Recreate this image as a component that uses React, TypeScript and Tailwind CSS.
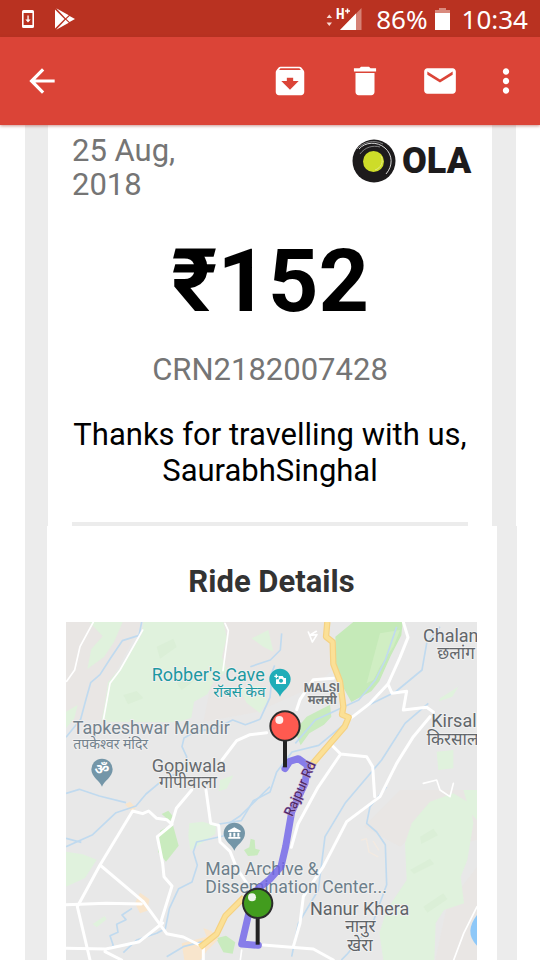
import type { ReactNode } from "react";
import { MdArchive, MdArrowBack, MdDelete, MdMail, MdMoreVert } from "react-icons/md";

function StatusBar() {
  return (
    <div className="flex h-[37px] items-center justify-between bg-[#b93221] pr-3 pl-[22px] text-white">
      <div className="flex items-center gap-5">
        <svg viewBox="0 0 12 18" className="h-[18px] w-3" aria-hidden="true">
          <path fillRule="evenodd" fill="#fff" d="M1.5 0h9A1.5 1.5 0 0 1 12 1.5v15a1.5 1.5 0 0 1-1.5 1.5h-9A1.5 1.5 0 0 1 0 16.5v-15A1.5 1.5 0 0 1 1.5 0zM1.6 3v12h8.800V3z" />
          <path fill="#fff" d="M5.4 5.5h1.300v4h2L6 12.500 3.400 9.500h2z" />
        </svg>
        <svg viewBox="0 0 22 22" className="size-[22px]" aria-hidden="true">
          <path fill="#fff" d="M1 1.500v19L10.500 11z" />
          <path fill="#fff" d="M2.200.300 14.800 7.300 11.600 10.200zM2.200 21.700l12.600-7-3.200-2.900zM15.600 7.900 21 11l-5.400 3.100L12.400 11z" />
        </svg>
      </div>
      <div className="flex items-center font-['Noto_Sans',sans-serif] text-[26px] leading-9">
        <svg viewBox="0 0 36 24" className="mr-3.5 h-6 w-9" aria-label="Mobile signal">
          <path fill="#f8d8d2" d="M3.300 7.500 6 11H.600zM3.300 19 6 15.500H.600z" />
          <path fill="#d68175" d="M35.500 1v22H14z" />
          <path fill="#fff" d="M30 6.500V23H14z" />
          <path fill="#b93221" d="M9 0h15v7l-5 6H9z" />
          <text x="10" y="12" fill="#fff" fontSize="14" fontWeight="700" fontFamily="'Roboto Condensed', 'Liberation Sans Narrow', Roboto, sans-serif">H</text>
          <path stroke="#fff" strokeWidth="1.500" d="M19 4h5M21.500 1.500v5" />
        </svg>
        <span>86%</span>
        <svg viewBox="0 0 15 22" className="mr-3 ml-[7px] h-[22px] w-[15px]" aria-label="Battery">
          <path fill="#d98a7e" d="M4 0h7v2h4v4H0V2h4z" />
          <path fill="#fff" d="M0 5h15v17H0z" />
        </svg>
        <span>10:34</span>
      </div>
    </div>
  );
}

function IconButton({ label, children }: { label: string; children: ReactNode }) {
  return (
    <button type="button" aria-label={label} className="flex size-[38px] items-center justify-center">
      {children}
    </button>
  );
}

function Toolbar() {
  return (
    <header className="relative flex h-[88px] items-center justify-between bg-[#db4437] pr-[15px] pl-[23px] text-[38px] text-white shadow-[0_1px_3px_rgba(150,50,40,0.5)]">
      <IconButton label="Back"><MdArrowBack /></IconButton>
      <div className="flex items-center">
        <div className="mr-7 flex gap-[37px]">
          <IconButton label="Archive"><MdArchive /></IconButton>
          <IconButton label="Delete"><MdDelete /></IconButton>
          <IconButton label="Mark as unread"><MdMail /></IconButton>
        </div>
        <IconButton label="More options"><MdMoreVert /></IconButton>
      </div>
    </header>
  );
}

function OlaLogo() {
  return (
    <svg viewBox="0 0 120 44" className="-mr-1 mt-[5px] h-11 w-[120px]" role="img" aria-label="Ola">
      <circle cx="22" cy="22" r="21.500" fill="#1d1b1c" />
      <path fill="none" stroke="#d9d9d9" strokeWidth="1" d="M7 10C13 3 25 2 33 9c8 7 8 18 1 26" />
      <path fill="none" stroke="#9a9a9a" strokeWidth=".8" d="M5 10C11 3 22 0 31 5M8 15C13 8 21 6 28 8" />
      <circle cx="21.500" cy="22.500" r="10.500" fill="#cddc29" />
      <path fill="none" stroke="#e3ea83" strokeWidth="1" d="M29 17c3 6 0 12-6 14" />
      <text x="50" y="34" fill="#1d1b1c" fontSize="36" fontWeight="900" fontFamily="Roboto, sans-serif">OLA</text>
    </svg>
  );
}

type Label = { text: string; x: number; y: number; size: number; fill: string; middle?: boolean; bold?: boolean };

const labels: Label[] = [
  { text: "Robber's Cave", x: 275, y: 184, size: 54, fill: "#1d99a1" },
  { text: "रॉबर्स केव", x: 538, y: 232, size: 45, fill: "#1d99a1", middle: true },
  { text: "Tapkeshwar Mandir", x: 38, y: 341, size: 54, fill: "#73828d" },
  { text: "तपकेश्वर मंदिर", x: 152, y: 388, size: 42, fill: "#73828d", middle: true },
  { text: "Gopiwala", x: 275, y: 455, size: 54, fill: "#666a6d" },
  { text: "गोपीवाला", x: 384, y: 505, size: 51, fill: "#666a6d", middle: true },
  { text: "Chalan", x: 1089, y: 66, size: 54, fill: "#62666a" },
  { text: "छलांग", x: 1188, y: 116, size: 51, fill: "#62666a", middle: true },
  { text: "MALSI", x: 785, y: 215, size: 36, fill: "#6c7074", middle: true, bold: true },
  { text: "मलसी", x: 787, y: 252, size: 36, fill: "#6c7074", middle: true, bold: true },
  { text: "Kirsal", x: 1114, y: 322, size: 54, fill: "#62666a" },
  { text: "किरसाल", x: 1100, y: 376, size: 51, fill: "#62666a" },
  { text: "Map Archive &", x: 436, y: 765, size: 53, fill: "#6d7f8b" },
  { text: "Dissemination Center...", x: 436, y: 819, size: 53, fill: "#6d7f8b" },
  { text: "Nanur Khera", x: 750, y: 886, size: 54, fill: "#5f6468" },
  { text: "नानुर", x: 901, y: 935, size: 51, fill: "#5f6468", middle: true },
  { text: "खेरा", x: 900, y: 992, size: 51, fill: "#5f6468", middle: true },
];

function PlacePin({ x, y, fill, children }: { x: number; y: number; fill: string; children: ReactNode }) {
  return (
    <g transform={`translate(${x} ${y})`}>
      <path fill={fill} d="M0 52C-5 36-32 24-32 0a32 32 0 0 1 64 0C32 24 5 36 0 52z" />
      {children}
    </g>
  );
}

function RoutePin({ x, y, fill }: { x: number; y: number; fill: string }) {
  return (
    <g transform={`translate(${x} ${y})`}>
      <path stroke="#222" strokeWidth="12" d="M0 44v80" />
      <circle r="44" fill={fill} stroke="#2b2b2b" strokeWidth="6" />
      <circle cx="-17" cy="-18" r="12" fill="#fff" fillOpacity=".9" />
    </g>
  );
}

function RideMap() {
  return (
    <svg viewBox="18 6 1233 1014" className="block w-full" role="img" aria-label="Map of the ride">
      <rect x="18" y="6" width="1233" height="1014" fill="#e8e8e8" />
      <g fill="#e9e6e4">
        <path d="M18 6h230L150 190l-20 110H18zM490 6h310l30 130-60 60-180 80-160 30z" />
        <path d="M1020 510h231v150l-80 20-90-60-60 60-110-60z" />
        <path d="M1160 860l91-120v280h-125z" />
      </g>
      <g fill="#e0f2dd">
        <path d="M250 6h240l10 45-14 60 16 42-40 30-20 40-40 22-8 48-40 14-230-2 10-50 10-68 34-40 40-62 26-40z" />
        <path d="M88 6h100l-26 60-30 45-50 36 12-60 34-38z" />
        <path d="M18 275l35-20-10 40-25 30z" />
        <path d="M575 55l50-25 15 65-30-15zM538 205l62-10 22 50-22 34-40-30z" />
        <path d="M1130 395l50-5v55l-45 5zM1140 235l55-35-18 30-40 14zM480 480l40-14-20 40-24 8z" />
        <path d="M18 695l50 8 42 16-35 55-57 26z" />
        <path d="M388 610l40-5 40 12-2 25-75 50-6-45z" />
        <path d="M98 912l36-24 6 10-30 24z" />
        <path d="M1110 545l70-25 50 30 10 60-18 110-20 50 10 80-60 20-25 40-4 110H970l-12-80 22-70 60-90-5-110 20-60z" />
        <path d="M1210 510h41v90l-20-20z" />
      </g>
      <g fill="#dbefd7">
        <path d="M290 80l50-24 10 25-50 35zM190 225l40-12 20 22-46 18zM350 190l45-30 10 20-40 30z" />
        <path d="M1080 650l40-24 14 20-50 26zM1050 750l60-34 12 16-60 30zM1090 860l60-40 12 18-60 40z" />
      </g>
      <path fill="#c5eab8" d="M826 50L880 6h148l-4 40-32 62-34 76-24 30-60 32-22-40-22-30-3-80z" />
      <path fill="#d0eec3" d="M960 40l60-10-20 50-40 60-20 40-20 10 16-60z" />
      <g fill="#c9ebbe">
        <path d="M740 290l70-36 4 36-22 24-44 26-26 36-18-44z" />
        <path d="M300 632l38-20 18 65-38 48-24-30z" />
        <path d="M305 582l20-10 13 16-8 16zM552 690l16-8 4-26 12 4 2 26 14 4-8 16-28 2zM468 955l30-8 28 20-8 34-28-4z" />
      </g>
      <path fill="#f8e5cc" d="M195 553l15-8 18 18-12 12zM225 850l15-32 28 20-6 34-22 8zM365 970l75-20-10-26 25 10 20 24-34 34-20 28h-48z" />
      <path fill="#8ec8f8" d="M1251 885v92q-21-22-20-45 2-24 20-47z" />

      <g fill="none" stroke="#c0daef" strokeWidth="5" strokeLinejoin="round">
        <path d="M245 6l-8 40-50 16-35 52-32 50-28 24-14 50-16 60-44 54" />
        <path d="M600 298l-44 16-38-14-50 24-60 10-36 20-6 26 14 30-4 36M600 298l30-66 6-60M630 172l14-36M665 40l-4 50-30 30-60 20" />
        <path d="M18 680l80-36 70-66 60-20 30-36 60-50 50-16M18 655l46 12M18 520l40-12 60 20 80 20" />
        <path d="M1140 20l-40 50-14 80-80 66-90 44-60 50-80 66-80 20-46 60-20 60-50 26-36 60-66 10" />
        <path d="M1010 20l-34 100-30 60-50 60-130 60-60 70M1105 250l-70 60-70 110-110 130-60 100-20 160-60 100-20 100" />
        <path d="M630 500l-90 88-30 20-20 40-80 18-10 30 12 40-16 50-40 20-28 60-12 60-26 14-60 20-40 38" />
        <path d="M216 865l-30 20 12 14-28 14 4 24-24 10 10 30-20 12" />
        <path d="M980 500l-50 60-10 50 30 26 26 38 4 120-40 110-30 40-50 60-16 16" />
        <path d="M320 1010l50-30 60-16" />
      </g>

      <g fill="none" stroke="#fff" strokeWidth="9" strokeLinejoin="round" strokeLinecap="round">
        <path strokeWidth="5" d="M100 6L60 80l-16 70-24 34M248 30l-68 120-30 40-20 110M495 10l10 22-16 120" />
        <path d="M620 338l-50 6-40 18-44 58M395 510l-46 55-15 50-42 35 16 80 4 40 24 28-34 110" />
        <path d="M218 573L120 735 52 860l38 160M218 573l30 8 18-8 24 22 30 4 16 14M120 735l130 110 70 96 50 10 60 30v39" />
        <path d="M18 854l120-4 106 2M18 985l120 2 100-22 70-56M135 995l50 25" />
        <path d="M438 510l14 100 24 6 4 50 30 28 20 50 40 60" />
        <path d="M1030 6l14 46-24 60-36 80-54 58-70 54M984 192l12 28 44-6-10 56 70-8 20 14M1110 290l-50 60-50 80-50 100-100 75-70 135-60 90-10 80-20 70" />
        <path d="M810 370l32 32 78 8 18 30 6 90M842 402l-68 100-60 110-20 70M610 975l150 12 60 33" />
        <path d="M820 175l-60 4-40 60-10 30" />
        <path strokeWidth="5" d="M745 36l12 30 14-22-22 2 20-12M545 990l-4 30M1251 860l-40 80-30 80M1090 490l40-10 10 30 30 20 10-40" />
        <path strokeWidth="4" stroke="#f3eae1" d="M905 660l14-4 8 40 26 14M940 664l16 26" />
      </g>

      <g fill="none" strokeLinejoin="round">
        <path stroke="#f5d182" strokeWidth="19" d="M802 6l-4 44 20 16 2 66 20 52 10 76-4 24 20 8-12 28-104 120M552 832l-56 56-26 54-50 40" />
        <path stroke="#fbe096" strokeWidth="12" d="M802 6l-4 44 20 16 2 66 20 52 10 76-4 24 20 8-12 28-104 120M552 832l-56 56-26 54-50 40" />
      </g>

      <g fontFamily="Roboto, 'Noto Sans', 'Noto Sans Devanagari', sans-serif" stroke="#f0f0f0" strokeWidth="6" strokeLinejoin="round" paintOrder="stroke">
        {labels.map((l) => (
          <text key={l.text} x={l.x} y={l.y} fontSize={l.size} fill={l.fill} fontWeight={l.bold ? 700 : 400} textAnchor={l.middle ? "middle" : "start"}>
            {l.text}
          </text>
        ))}
      </g>

      <PlacePin x={660} y={178} fill="#20adb8">
        <path fill="#fff" fillRule="evenodd" d="M-4-10h12l4 6h6v18h-30V0h8zM3-2a6 6 0 1 0 .1 0z" />
        <path stroke="#fff" strokeWidth="4" d="M-17-9h12M-11-15v12" />
      </PlacePin>
      <PlacePin x={126} y={448} fill="#7496a8">
        <text y="14" textAnchor="middle" fill="#fff" fontSize="44" fontWeight="700" fontFamily="'Noto Sans', sans-serif">ॐ</text>
      </PlacePin>
      <PlacePin x={523} y={640} fill="#7496a8">
        <path fill="#fff" d="M0-18l19 10v4h-38v-4zM-15-2h6v12h-6zM-3-2h6v12h-6zM9-2h6v12H9zM-18 11h36v5h-36z" />
      </PlacePin>

      <path fill="none" stroke="#6e62e8" strokeOpacity=".8" strokeWidth="21" strokeLinejoin="round" strokeLinecap="round" d="M675 446l14-22 26-8 28 20-8 54-40 86-18 104-14 60-34 38-48 40-36 154 50 4" />
      <text transform="translate(697 592) rotate(-66)" fontSize="41" fill="#4b2767" stroke="#b89acb" strokeWidth="3" paintOrder="stroke" fontFamily="Roboto, sans-serif">Rajpur Rd</text>
      <RoutePin x={675} y={318} fill="#ff5a50" />
      <RoutePin x={593} y={850} fill="#429c1e" />
    </svg>
  );
}

export default function App() {
  return (
    <div className="min-h-screen bg-white font-[Roboto,sans-serif] text-[31px] leading-9 text-black">
      <StatusBar />
      <Toolbar />
      <main>
        <section className="mr-6 ml-[25px] border-r-24 border-l-23 border-[#ececec] px-6 pt-[9px]">
          <div className="flex items-start justify-between">
            <p className="w-30 leading-[34px] text-[#757575]">25 Aug, 2018</p>
            <OlaLogo />
          </div>
          <div className="text-center">
            <h1 className="mt-[29px] text-[88px] leading-[100px] font-bold">₹152</h1>
            <p className="mt-[21px] text-[#757575]">CRN2182007428</p>
            <p className="-mx-2 mt-[29px]">
              Thanks for travelling with us,
              <br />
              SaurabhSinghal
            </p>
          </div>
          <hr className="mt-[33px] h-1 border-0 bg-[#ececec]" />
        </section>
        <section className="mr-[23px] ml-[25px] border-r-20 border-l-22 border-[#ececec] pr-5 pl-[19px]">
          <h2 className="pt-[38px] pb-[22px] text-center font-bold text-[#333]">Ride Details</h2>
          <RideMap />
        </section>
      </main>
    </div>
  );
}
